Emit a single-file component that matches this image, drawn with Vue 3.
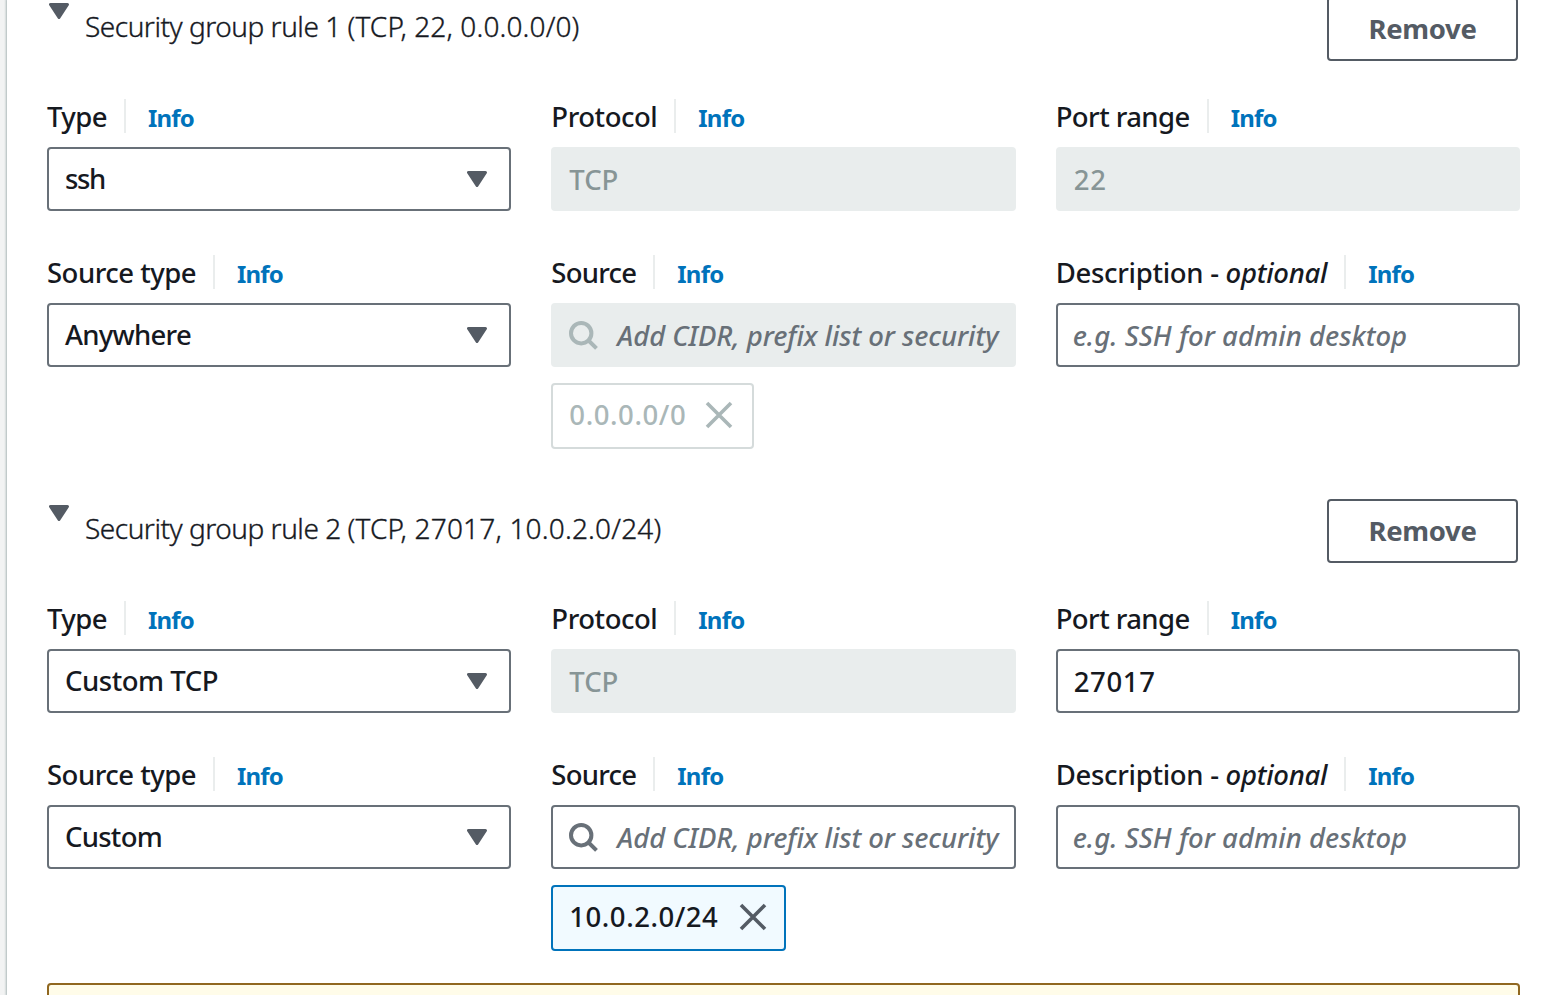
<script setup>
const base = [
  { label: 'Type', w: 60, kind: 'select' },
  { label: 'Protocol', w: 106, kind: 'input' },
  { label: 'Port range', w: 134, kind: 'input' },
  { label: 'Source type', w: 149, kind: 'select' },
  { label: 'Source', w: 85, kind: 'search' },
  { label: 'Description - ', w: 271.5, kind: 'placeholder', optional: true },
]
const make = (values) => base.map((f, i) => ({ ...f, ...values[i] }))

const description = { text: 'e.g. SSH for admin desktop', tw: 334.5 }
const search = { text: 'Add CIDR, prefix list or security', tw: 381 }

const rules = [
  {
    title: 'Security group rule 1 ',
    detail: '(TCP, 22, 0.0.0.0/0)',
    dw: 232,
    fields: make([
      { text: 'ssh', tw: 40 },
      { text: 'TCP', tw: 49, disabled: true },
      { text: '22', tw: 33, disabled: true },
      { text: 'Anywhere', tw: 126 },
      { ...search, disabled: true, token: '0.0.0.0/0', kw: 117 },
      description,
    ]),
  },
  {
    title: 'Security group rule 2 ',
    detail: '(TCP, 27017, 10.0.2.0/24)',
    dw: 314,
    fields: make([
      { text: 'Custom TCP', tw: 153 },
      { text: 'TCP', tw: 49, disabled: true },
      { text: '27017', tw: 82 },
      { text: 'Custom', tw: 97 },
      { ...search, token: '10.0.2.0/24', kw: 149 },
      description,
    ]),
  },
]

// Tracks a text so that its run takes the given width.
const vFit = {
  mounted(el, { value }) {
    const natural = el.getBoundingClientRect().width
    el.style.letterSpacing = (value - natural) / el.textContent.length + 'px'
  },
}
</script>

<template>
  <div class="page">
    <main class="panel">
      <section v-for="rule in rules" :key="rule.title" class="rule">
        <header class="head">
          <svg class="caret" width="20" height="16" viewBox="0 0 20 16"><path d="M1.5 1.5h17L10 14.5z" /></svg>
          <h3><span v-fit="262.5">{{ rule.title }}</span><span v-fit="rule.dw">{{ rule.detail }}</span></h3>
          <button type="button"><span v-fit="108">Remove</span></button>
        </header>
        <div class="grid">
          <div v-for="f in rule.fields" :key="f.label" class="field">
            <div class="label">
              <span v-fit="f.w" class="name">{{ f.label }}<i v-if="f.optional">optional</i></span>
              <span class="sep"></span>
              <a><span v-fit="46">Info</span></a>
            </div>
            <div class="control" :class="[f.kind, { disabled: f.disabled }]">
              <svg v-if="f.kind === 'search'" class="glass" width="32" height="32" viewBox="0 0 32 32">
                <circle cx="14.2" cy="14.2" r="10.2" /><path d="M21.5 21.5l8 7.9" />
              </svg>
              <span v-fit="f.tw" class="text">{{ f.text }}</span>
              <svg v-if="f.kind === 'select'" class="caret" width="20" height="16" viewBox="0 0 20 16"><path d="M1.5 1.5h17L10 14.5z" /></svg>
            </div>
            <div v-if="f.token" class="token" :class="{ off: f.disabled }">
              <span v-fit="f.kw" class="text">{{ f.token }}</span>
              <svg width="32" height="32" viewBox="0 0 32 32"><path d="M4 4l24 24M28 4L4 28" /></svg>
            </div>
          </div>
        </div>
      </section>
      <div class="alert"></div>
    </main>
  </div>
</template>

<style>
body { background: #f2f3f3; }
</style>

<style scoped>
.page {
  height: 995px;
  overflow: hidden;
  padding-left: 7px;
  box-sizing: border-box;
  font: 500 27.5px/34px "Noto Sans", "Open Sans", sans-serif;
  color: #16191f;
}
.panel {
  display: flow-root;
  height: 995px;
  box-sizing: border-box;
  padding: 0 33px 0 40px;
  background: #fff;
  box-shadow: 0 0 2px 1px #aab7b8;
}
.rule { height: 502px; }
.rule:first-child { margin-top: -3px; }
.head {
  display: flex;
  align-items: flex-start;
  height: 64px;
  padding-right: 2px;
  margin-bottom: 38px;
}
.head .caret { margin: 6px 16px 0 2px; }
.caret { flex: none; fill: #545b64; stroke: #545b64; stroke-width: 3; stroke-linejoin: round; }
h3 {
  flex: 1;
  margin: 0;
  font-size: 28px;
  font-weight: 300;
  line-height: 59px;
  white-space: pre;
  -webkit-text-stroke: 0.35px #16191f;
}
button {
  width: 191px;
  height: 64px;
  box-sizing: border-box;
  padding: 0 0 1px;
  border: 2px solid #545b64;
  border-radius: 4px;
  background: #fff;
  color: #545b64;
  font: 700 27.5px/34px "Noto Sans", "Open Sans", sans-serif;
}
.grid {
  display: grid;
  grid-template-columns: repeat(3, minmax(0, 1fr));
  column-gap: 40px;
  row-gap: 44px;
}
.label {
  display: flex;
  align-items: baseline;
  height: 34px;
  margin-bottom: 14px;
  line-height: 36px;
  white-space: nowrap;
}
.name { white-space: pre; }
.sep {
  align-self: stretch;
  width: 2px;
  margin: 0 22px 0 17px;
  background: #eaeded;
}
.label a { color: #0073bb; font-size: 24px; font-weight: 700; }
.control {
  display: flex;
  align-items: center;
  height: 64px;
  box-sizing: border-box;
  padding: 0 16px;
  border: 2px solid #687078;
  border-radius: 4px;
  white-space: nowrap;
}
.control .text { padding-top: 2px; }
.control.select { justify-content: space-between; padding-right: 22px; }
.select .text { padding: 0 0 1px; }
.disabled { background: #e9eded; border-color: #e9eded; color: #879596; }
.search, .placeholder { color: #687078; font-style: italic; }
.placeholder { padding-left: 15px; }
.search { padding: 0 14px; }
.glass { flex: none; margin-right: 18px; fill: none; stroke: #687078; stroke-width: 4; }
.disabled .glass { stroke: #aab7b8; }
.control.select .text { padding: 0 0 1px; }
.token {
  display: inline-flex;
  align-items: center;
  gap: 19px;
  height: 66px;
  box-sizing: border-box;
  margin-top: 16px;
  padding: 0 15px 0 16px;
  border: 2px solid #0073bb;
  border-radius: 4px;
  background: #f1faff;
  vertical-align: top;
}
.token .text { padding-bottom: 3px; }
.token svg { margin-bottom: 2px; fill: none; stroke: #545b64; stroke-width: 3.6; }
.off { gap: 17px; padding-right: 17px; background: #fff; border-color: #d5dbdb; color: #aab7b8; }
.token.off svg { stroke: #aab7b8; }
.alert {
  height: 60px;
  margin-top: -18px;
  border: 2px solid #906720;
  border-radius: 4px;
  background: #fffce9;
}
</style>
